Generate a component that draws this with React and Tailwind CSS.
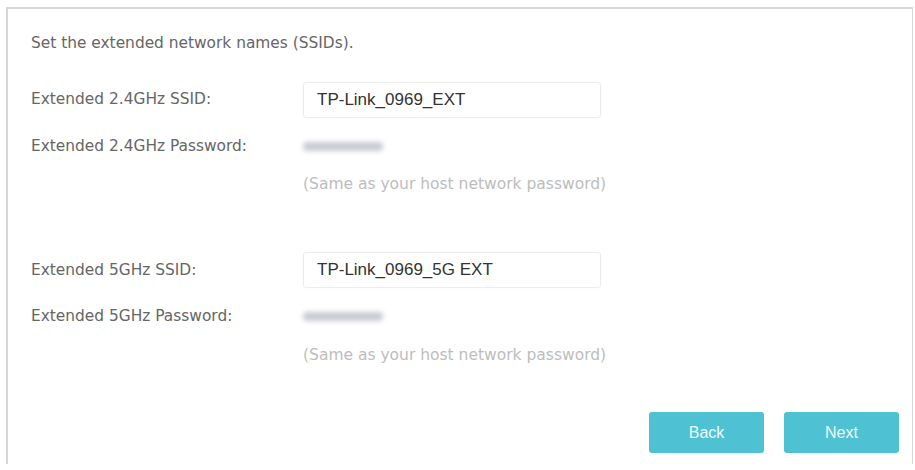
import React from "react";

const labelFont = { fontFamily: '"DejaVu Sans", Verdana, sans-serif' };

function Masked() {
    return (
        <div className="h-[20px] flex items-center">
            <div className="w-[80px] h-[9px] bg-[#c9cbd4] blur-[2.5px] rounded-sm" />
        </div>
    );
}

function SsidInput({ value }) {
    return (
        <div className="w-[298px] h-[36px] border border-[#ececec] rounded-[3px] flex items-center pl-[13px] text-[17px] text-[#333] font-['Liberation_Sans',Arial,sans-serif] shadow-[0_0_2px_rgba(0,0,0,0.04)]">
            {value}
        </div>
    );
}

function Band({ band, ssid }) {
    return (
        <div className="grid grid-cols-[272px_1fr] items-center">
            <div className="text-[15.4px] text-[#666]">Extended {band} SSID:</div>
            <SsidInput value={ssid} />
            <div className="mt-[17px] text-[15.4px] text-[#666]">Extended {band} Password:</div>
            <div className="mt-[17px]">
                <Masked />
            </div>
            <div />
            <div className="mt-[17px] h-[20px] flex items-center text-[15.5px] text-[#bdbdbd]">
                (Same as your host network password)
            </div>
        </div>
    );
}

export default function App() {
    return (
        <div className="w-[915px] h-[470px] bg-white pt-[7px] pl-[6px] pr-[2px]" style={labelFont}>
            <div className="h-[457px] border-l-2 border-t-2 border-r border-[#d6d6d6] pl-[23px] pr-[13px] flex flex-col">
                <div className="mt-[25px] h-[20px] flex items-center text-[15.4px] text-[#666]">
                    Set the extended network names (SSIDs).
                </div>
                <div className="mt-[28px]">
                    <Band band="2.4GHz" ssid="TP-Link_0969_EXT" />
                </div>
                <div className="mt-[57px]">
                    <Band band="5GHz" ssid="TP-Link_0969_5G EXT" />
                </div>
                <div className="mt-auto mb-[11px] flex justify-end gap-[20px]">
                    <button className="w-[115px] h-[41px] rounded-[3px] bg-[#4ec2d2] text-white/90 text-[16px] font-['Liberation_Sans',Arial,sans-serif]">
                        Back
                    </button>
                    <button className="w-[115px] h-[41px] rounded-[3px] bg-[#4ec2d2] text-white/90 text-[16px] font-['Liberation_Sans',Arial,sans-serif]">
                        Next
                    </button>
                </div>
            </div>
        </div>
    );
}
